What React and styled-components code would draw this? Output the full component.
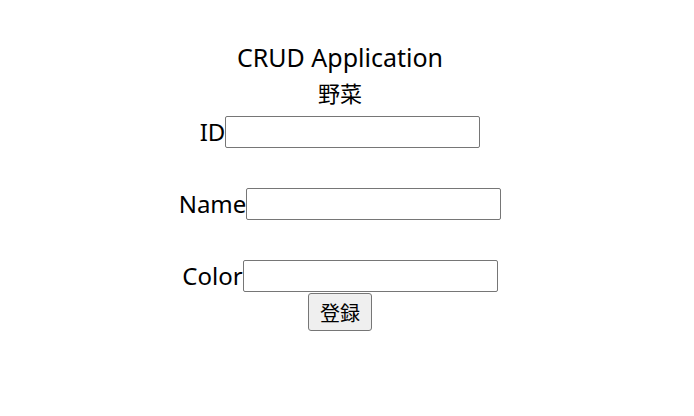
import React from 'react'
import styled, { createGlobalStyle } from 'styled-components'

const GlobalStyle = createGlobalStyle`
    body {
        margin: 8px;
        background: #ffffff;
        color: #000000;
        font-family: "Noto Sans", "Noto Sans CJK JP", sans-serif;
    }
`

const Page = styled.div`
    padding: 31px 14px 0 0;
    text-align: center;
    font-size: 24px;
    line-height: 36px;
`

const Title = styled.div`
    font-size: 25px;
`

const SubTitle = styled.div`
    font-size: 22px;
`

const Field = styled.div`
    height: 36px;
    margin-bottom: ${(props) => (props.last ? '0' : '36px')};
`

const Label = styled.label`
    vertical-align: middle;
`

const TextInput = styled.input`
    box-sizing: border-box;
    width: 255px;
    height: 32px;
    border: 1px solid #767676;
    border-radius: 2px;
    vertical-align: middle;
    font-size: 20px;
`

const SubmitButton = styled.button`
    box-sizing: border-box;
    width: 64px;
    height: 38px;
    margin-top: 2px;
    border: 1px solid #767676;
    border-radius: 3px;
    background: #efefef;
    font-family: "Noto Sans CJK JP", sans-serif;
    font-size: 20px;
    padding: 0;
    vertical-align: top;
`

export default function App() {
    return (
        <Page>
            <GlobalStyle />
            <Title>CRUD Application</Title>
            <SubTitle>野菜</SubTitle>
            <Field>
                <Label>ID</Label>
                <TextInput type="text" />
            </Field>
            <Field>
                <Label>Name</Label>
                <TextInput type="text" />
            </Field>
            <Field last>
                <Label>Color</Label>
                <TextInput type="text" />
            </Field>
            <SubmitButton>登録</SubmitButton>
        </Page>
    )
}
